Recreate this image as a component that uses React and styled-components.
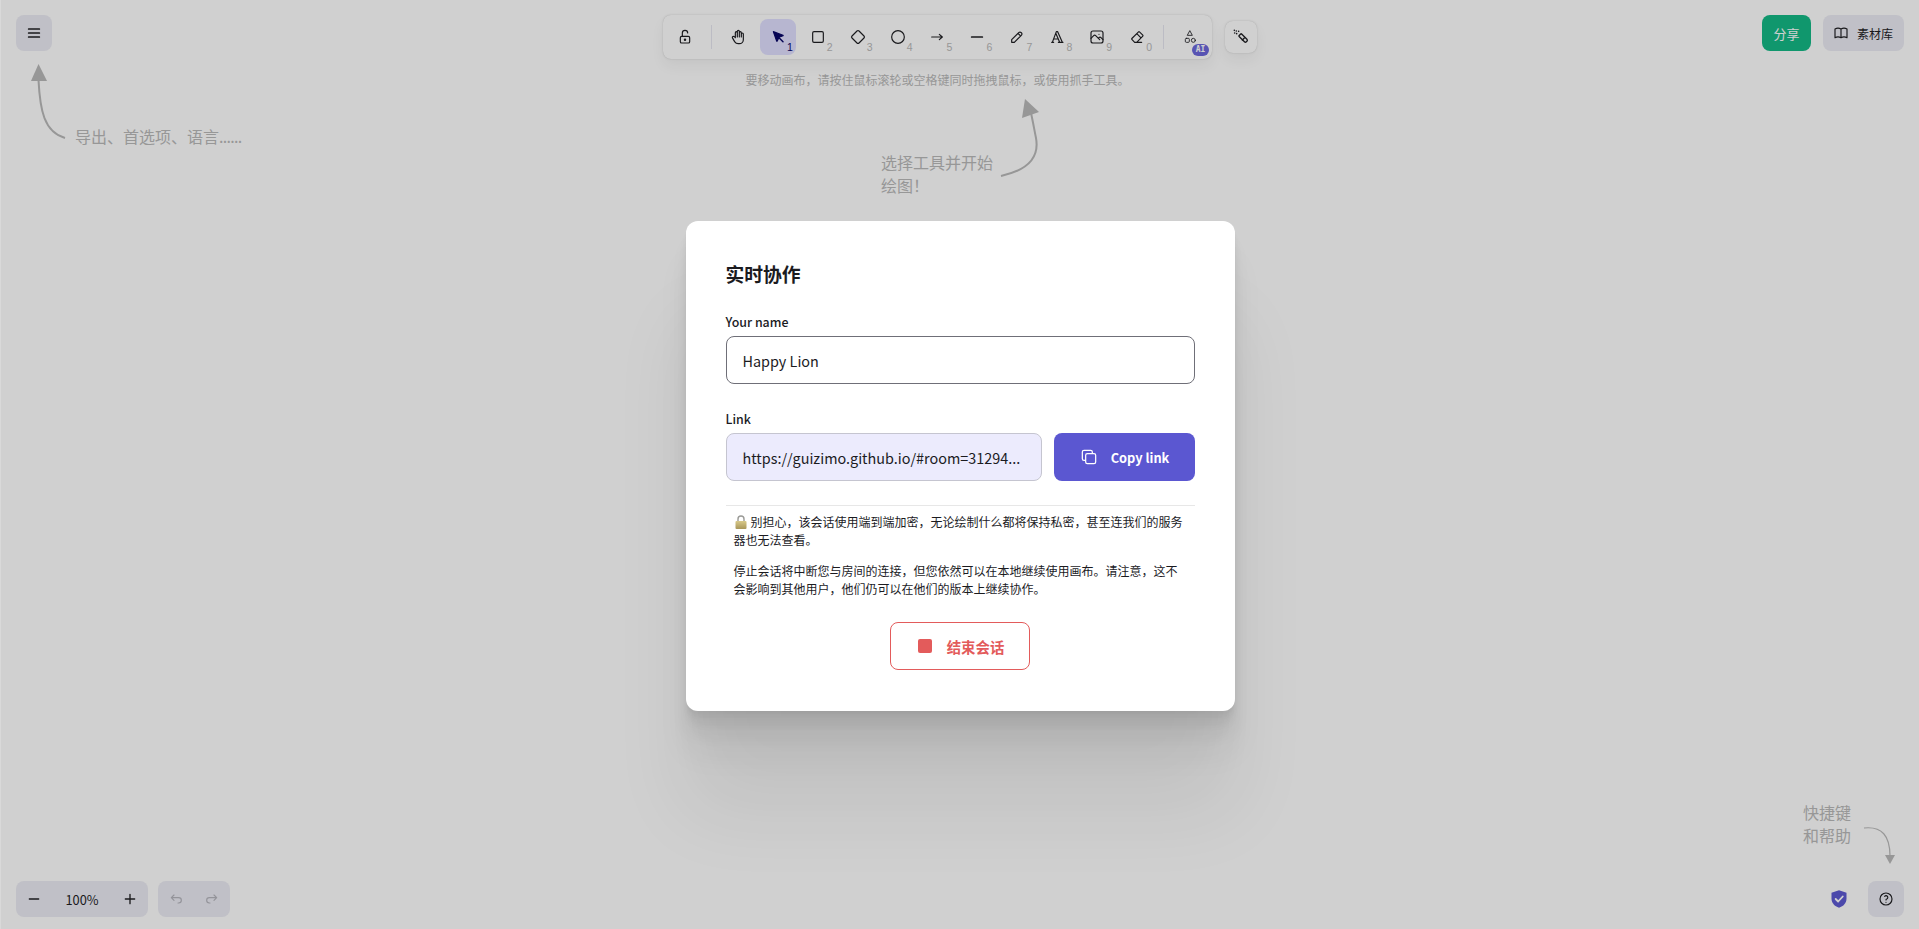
import React from "react";
import styled, { createGlobalStyle } from "styled-components";

const GlobalStyle = createGlobalStyle`
  html, body {
    margin: 0;
    padding: 0;
    height: 100%;
    background: #ffffff;
    overflow: hidden;
    font-family: "Noto Sans CJK SC", "Noto Sans", sans-serif;
  }
  * { box-sizing: border-box; }
`;

const Page = styled.div`
  position: relative;
  height: 100vh;
  display: flex;
  flex-direction: column;
  justify-content: space-between;
  padding: 15px 15px 12px 16px;
  color: #1b1b1f;
`;

const TopBar = styled.header`
  display: grid;
  grid-template-columns: 1fr auto 1fr;
  align-items: start;
`;

const BottomBar = styled.footer`
  display: flex;
  align-items: center;
  justify-content: space-between;
`;

const Row = styled.div`
  display: flex;
  align-items: ${(p) => p.$align || "center"};
  gap: ${(p) => p.$gap || 0}px;
  justify-content: ${(p) => p.$justify || "flex-start"};
`;

const SquareButton = styled.button`
  width: 36px;
  height: 36px;
  padding: 0;
  border: 0;
  border-radius: 8px;
  background: ${(p) => (p.$flat ? "transparent" : "#ececf4")};
  color: ${(p) => (p.$muted ? "#b4b4bc" : "#1b1b1f")};
  display: flex;
  align-items: center;
  justify-content: center;
`;

const ToolColumn = styled.div`
  display: flex;
  flex-direction: column;
  align-items: center;
  gap: 12px;
`;

const Toolbar = styled.div`
  display: flex;
  align-items: center;
  gap: 4px;
  padding: 4px;
  height: 44px;
  width: 549px;
  background: #ffffff;
  border-radius: 8px;
  box-shadow: 0 0 1px rgba(0, 0, 0, 0.17), 0 0 3px rgba(0, 0, 0, 0.08), 0 7px 14px rgba(0, 0, 0, 0.05);
`;

const ToolDivider = styled.span`
  width: 1px;
  height: 24px;
  margin: 0 4px;
  background: #e7e7f0;
`;

const ToolButton = styled.button`
  position: relative;
  width: 36px;
  height: 36px;
  padding: 0;
  border: 0;
  border-radius: 8px;
  background: ${(p) => (p.$active ? "#e0dfff" : "transparent")};
  color: ${(p) => (p.$active ? "#030064" : "#1b1b1f")};
  display: flex;
  align-items: center;
  justify-content: center;
`;

const ToolNumber = styled.span`
  position: absolute;
  right: 3px;
  bottom: 2px;
  font-size: 10.5px;
  line-height: 12px;
  color: ${(p) => (p.$active ? "#030064" : "#b8b8b8")};
`;

const AiBadge = styled.span`
  position: absolute;
  right: -1px;
  bottom: -1px;
  width: 17px;
  height: 12px;
  border-radius: 6px;
  background: #6965db;
  color: #ffffff;
  font-size: 8px;
  font-weight: 700;
  line-height: 12px;
  text-align: center;
  font-family: "DejaVu Sans Mono", monospace;
`;

const LaserButton = styled.button`
  width: 32px;
  height: 32px;
  margin: 6px 0 0 13px;
  padding: 0;
  border: 0;
  border-radius: 8px;
  background: #ffffff;
  color: #1b1b1f;
  box-shadow: 0 0 1px rgba(0, 0, 0, 0.17), 0 0 3px rgba(0, 0, 0, 0.08), 0 7px 14px rgba(0, 0, 0, 0.05);
  display: flex;
  align-items: center;
  justify-content: center;
`;

const CanvasHint = styled.div`
  font-size: 12px;
  line-height: 17px;
  color: #b8b8b8;
  white-space: nowrap;
`;

const ShareButton = styled.button`
  width: 49px;
  height: 36px;
  padding: 0;
  border: 0;
  border-radius: 8px;
  background: #0fb884;
  color: #ffffff;
  font: 400 13px "Noto Sans CJK SC", sans-serif;
`;

const LibraryButton = styled.button`
  width: 81px;
  height: 36px;
  padding: 0 0 0 10px;
  border: 0;
  border-radius: 8px;
  background: #ececf4;
  color: #1b1b1f;
  font: 400 12px "Noto Sans CJK SC", sans-serif;
  display: flex;
  align-items: center;
  gap: 8px;
`;

const ControlGroup = styled.div`
  display: flex;
  align-items: center;
  height: 36px;
  border-radius: 8px;
  background: #ececf4;
`;

const ZoomValue = styled.span`
  width: 60px;
  font-size: 12.8px;
  text-align: center;
`;

const Encrypted = styled.span`
  display: flex;
  margin-right: 19px;
  color: #5b57d1;
`;

const WelcomeText = styled.div`
  position: absolute;
  top: ${(p) => p.$top}px;
  left: ${(p) => p.$left}px;
  width: ${(p) => p.$width}px;
  font-size: 16px;
  line-height: 23px;
  color: #b8b8b8;
`;

const TightDots = styled.span`
  letter-spacing: -0.7px;
`;

const WelcomeArrow = styled.svg`
  position: absolute;
  top: ${(p) => p.$top}px;
  left: ${(p) => p.$left}px;
  fill: none;
  stroke: #b8b8b8;
  stroke-width: 2;
`;

const Overlay = styled.div`
  position: absolute;
  inset: 0;
  background: rgba(18, 18, 18, 0.2);
  box-shadow: inset 1px 0 0 rgba(255, 255, 255, 0.2);
  display: flex;
  align-items: center;
  justify-content: center;
`;

const Modal = styled.section`
  width: 549px;
  height: 490px;
  padding: 39.5px 40px;
  margin: 2px 0 0 1px;
  background: #ffffff;
  border-radius: 12px;
  box-shadow: 0 100px 80px rgba(0, 0, 0, 0.07), 0 41.78px 33.42px rgba(0, 0, 0, 0.05),
    0 22.34px 17.87px rgba(0, 0, 0, 0.042), 0 12.52px 10.02px rgba(0, 0, 0, 0.035),
    0 6.65px 5.32px rgba(0, 0, 0, 0.028), 0 2.77px 2.21px rgba(0, 0, 0, 0.02);
`;

const Title = styled.h2`
  margin: 0 0 24px;
  font-size: 18.8px;
  font-weight: 700;
  line-height: 28px;
  color: #1b1b1f;
`;

const Field = styled.label`
  display: flex;
  flex-direction: column;
  gap: 4px;
  flex: 1;
  min-width: 0;
  font-size: 12.4px;
  font-weight: 500;
  line-height: 20px;
  color: #1b1b1f;
`;

const TextInput = styled.input`
  width: 100%;
  height: 48px;
  padding: 0 16px;
  border: 1px solid ${(p) => (p.$readOnlyLook ? "#c5c5d0" : "#6f6f78")};
  border-radius: 8px;
  background: ${(p) => (p.$readOnlyLook ? "#ecebfd" : "#ffffff")};
  color: #1b1b1f;
  font: 400 14.4px "Noto Sans CJK SC", sans-serif;
  outline: none;
`;

const LinkRow = styled.div`
  display: flex;
  align-items: flex-end;
  gap: 12px;
  margin-top: 25px;
`;

const CopyButton = styled.button`
  flex: 0 0 141px;
  height: 48px;
  padding: 0;
  border: 0;
  border-radius: 8px;
  background: #5b57d1;
  color: #ffffff;
  font: 600 12.8px "Noto Sans CJK SC", sans-serif;
  display: flex;
  align-items: center;
  justify-content: center;
  gap: 12px;
`;

const Separator = styled.hr`
  height: 1px;
  margin: 24px 0 7px;
  border: 0;
  background: #e7e7e7;
`;

const Note = styled.p`
  margin: 0 0 12px;
  padding: 0 8px;
  font-size: 12px;
  line-height: 18.3px;
  color: #1b1b1f;
`;

const LockMark = styled.svg`
  display: inline-block;
  vertical-align: -2px;
  margin: 0 4px 0 1px;
`;

const EndRow = styled.div`
  display: flex;
  justify-content: center;
  margin-top: 24px;
`;

const EndButton = styled.button`
  width: 140px;
  height: 48px;
  padding: 0 0 0 2px;
  border: 1px solid #e35b5b;
  border-radius: 8px;
  background: #ffffff;
  color: #e35b5b;
  font: 600 14.4px "Noto Sans CJK SC", sans-serif;
  display: flex;
  align-items: center;
  justify-content: center;
  gap: 15px;
`;

const StopMark = styled.span`
  width: 14px;
  height: 14px;
  border-radius: 2px;
  background: #e35b5b;
`;

const Icon = ({ size = 16, width = 1.75, fill = "none", children }) => (
  <svg
    width={size}
    height={size}
    viewBox="0 0 24 24"
    fill={fill}
    stroke="currentColor"
    strokeWidth={width}
    strokeLinecap="round"
    strokeLinejoin="round"
  >
    {children}
  </svg>
);

const tools = [
  {
    key: "hand",
    icon: (
      <path d="M8 13v-7.5a1.5 1.5 0 0 1 3 0v6.5M11 5.5v-2a1.5 1.5 0 1 1 3 0v8.5M14 5.5a1.5 1.5 0 0 1 3 0v6.5M17 7.5a1.5 1.5 0 0 1 3 0v8.5a6 6 0 0 1 -6 6h-2h.208a6 6 0 0 1 -5.012 -2.7l-.196 -.3c-.312 -.479 -1.407 -2.388 -3.286 -5.728a1.5 1.5 0 0 1 .536 -2.022a1.867 1.867 0 0 1 2.28 .28l1.47 1.47" />
    ),
  },
  {
    key: "selection",
    n: 1,
    active: true,
    fill: "currentColor",
    icon: (
      <>
        <path d="M5 4l5 14.200a.4.4 0 0 0 .7 0l2.800-5.700 6-2.400a.4.4 0 0 0 0-.7z" />
        <path d="M13.500 13l6 6" strokeWidth="2.200" />
      </>
    ),
  },
  { key: "rectangle", n: 2, icon: <rect x="4" y="4" width="16" height="16" rx="2" /> },
  {
    key: "diamond",
    n: 3,
    icon: (
      <path d="M10.5 21l-7.500-7.500c-.8-.8-.8-2.200 0-3l7.500-7.500c.8-.8 2.200-.8 3 0l7.500 7.500c.8.8.8 2.200 0 3l-7.500 7.500c-.8.8-2.200.8-3 0z" />
    ),
  },
  { key: "ellipse", n: 4, icon: <circle cx="12" cy="12" r="9.500" /> },
  { key: "arrow", n: 5, icon: <path d="M4 12h16M15.500 8l4.500 4-4.500 4" /> },
  { key: "line", n: 6, width: 2.6, icon: <path d="M4 12h16" /> },
  {
    key: "draw",
    n: 7,
    icon: <path d="M4 20h4l10.5-10.5a2.83 2.83 0 0 0-4-4L4 16v4M13.5 6.5l4 4" />,
  },
  {
    key: "text",
    n: 8,
    icon: <path d="M4 20h3M14 20h7M6.9 15h6.9M10.2 6.3L16 20M5 20l6-16h2l7 16" />,
  },
  {
    key: "image",
    n: 9,
    icon: (
      <>
        <rect x="3" y="3" width="18" height="18" rx="3" />
        <path d="M3 14l4-4c1-1 2-1 3 0l6 6M14 14l1-1c1-1 2-1 3 0l3 3M15 8h.01" />
      </>
    ),
  },
  {
    key: "eraser",
    n: 0,
    icon: (
      <path d="M19 20h-10.500l-4.210-4.300a1 1 0 0 1 0-1.410l10-10a1 1 0 0 1 1.410 0l5 5a1 1 0 0 1 0 1.410l-9.200 9.300M18 13.300l-6.300-6.300" />
    ),
  },
];

const App = () => (
  <>
    <GlobalStyle />
    <Page>
      <TopBar>
        <div>
          <SquareButton>
            <Icon width={2.6}>
              <path d="M4 6h16M4 12h16M4 18h16" />
            </Icon>
          </SquareButton>
        </div>
        <Row $align="flex-start">
          <ToolColumn>
            <Toolbar>
              <ToolButton>
                <Icon>
                  <rect x="5" y="11" width="14" height="10" rx="2" />
                  <circle cx="12" cy="16" r="1" />
                  <path d="M8 11V6a4 4 0 0 1 8 0" />
                </Icon>
              </ToolButton>
              <ToolDivider />
              {tools.map((tool) => (
                <ToolButton key={tool.key} $active={tool.active}>
                  <Icon width={tool.width} fill={tool.fill}>
                    {tool.icon}
                  </Icon>
                  {tool.n !== undefined && <ToolNumber $active={tool.active}>{tool.n}</ToolNumber>}
                </ToolButton>
              ))}
              <ToolDivider />
              <ToolButton>
                <Icon width={1.3}>
                  <path d="M12 3l3.500 6.500h-7z" />
                  <rect x="5" y="14" width="6" height="6" rx="1.500" />
                  <circle cx="17" cy="17" r="3" />
                </Icon>
                <AiBadge>AI</AiBadge>
              </ToolButton>
            </Toolbar>
            <CanvasHint>{"要移动画布\uFF0C请按住鼠标滚轮或空格键同时拖拽鼠标\uFF0C或使用抓手工具。"}</CanvasHint>
          </ToolColumn>
          <LaserButton>
            <Icon width={2}>
              <path d="M9 10l2.500-2.500a1 1 0 0 1 1.400 0l8 8a2 2 0 0 1 0 2.800l-.9.900a2 2 0 0 1-2.800 0l-8-8a1 1 0 0 1 0-1.400z" />
              <path d="M14 16.500l3-3" />
              <path d="M5 3v.01M2.500 6v.01M8.500 3.500v.01M5.500 7v.01M2 2v.01" strokeWidth="2.400" />
            </Icon>
          </LaserButton>
        </Row>
        <Row $gap={12} $justify="flex-end">
          <ShareButton>分享</ShareButton>
          <LibraryButton>
            <Icon>
              <path d="M3 19a9 9 0 0 1 9 0a9 9 0 0 1 9 0M3 6a9 9 0 0 1 9 0a9 9 0 0 1 9 0M3 6v13M12 6v13M21 6v13" />
            </Icon>
            素材库
          </LibraryButton>
        </Row>
      </TopBar>

      <BottomBar>
        <Row $gap={10}>
          <ControlGroup>
            <SquareButton $flat>
              <Icon width={2}>
                <path d="M5 12h14" />
              </Icon>
            </SquareButton>
            <ZoomValue>100%</ZoomValue>
            <SquareButton $flat>
              <Icon width={2}>
                <path d="M12 5v14M5 12h14" />
              </Icon>
            </SquareButton>
          </ControlGroup>
          <ControlGroup>
            <SquareButton $flat $muted>
              <Icon>
                <path d="M9 14l-4-4 4-4M5 10h11a4 4 0 1 1 0 8h-1" />
              </Icon>
            </SquareButton>
            <SquareButton $flat $muted>
              <Icon>
                <path d="M15 14l4-4-4-4M19 10H8a4 4 0 1 0 0 8h1" />
              </Icon>
            </SquareButton>
          </ControlGroup>
        </Row>
        <Row>
          <Encrypted>
            <svg width="20" height="20" viewBox="0 0 24 24">
              <path fill="currentColor" d="M12 1.500l9 3v7c0 5.600-3.700 9.500-9 11-5.300-1.500-9-5.400-9-11v-7z" />
              <path fill="none" stroke="#fff" strokeWidth="2.200" strokeLinecap="round" strokeLinejoin="round" d="M8 12l3 3 5.500-6" />
            </svg>
          </Encrypted>
          <SquareButton>
            <Icon>
              <circle cx="12" cy="12" r="9" />
              <path d="M12 17v.01M12 13.500a1.500 1.500 0 0 1 1-1.500a2.600 2.600 0 1 0-3-4" />
            </Icon>
          </SquareButton>
        </Row>
      </BottomBar>

      <WelcomeText $top={125} $left={75} $width={200}>
        导出、首选项、语言<TightDots>......</TightDots>
      </WelcomeText>
      <WelcomeArrow $top={60} $left={28} width="42" height="84" viewBox="0 0 42 84">
        <path d="M10.500 20C12 50 16 72 37 78" />
        <path d="M10.500 4L3 21h16z" fill="#b8b8b8" stroke="none" />
      </WelcomeArrow>

      <WelcomeText $top={151} $left={881} $width={116}>{"选择工具并开始绘图\uFF01"}</WelcomeText>
      <WelcomeArrow $top={96} $left={998} width="44" height="84" viewBox="0 0 44 84">
        <path d="M3 80C26 75 42 64 38 42C36 32 35 26 33 17" />
        <path d="M27 3L24 22L41 16z" fill="#b8b8b8" stroke="none" />
      </WelcomeArrow>

      <WelcomeText $top={801} $left={1803} $width={50}>快捷键和帮助</WelcomeText>
      <WelcomeArrow $top={824} $left={1862} width="38" height="42" viewBox="0 0 38 42">
        <path d="M2 4C20 2 28 12 28 32" strokeWidth="1.200" />
        <path d="M28 40L23 31h10z" fill="#b8b8b8" stroke="none" />
      </WelcomeArrow>

      <Overlay>
        <Modal>
          <Title>实时协作</Title>
          <Field>
            Your name
            <TextInput defaultValue="Happy Lion" />
          </Field>
          <LinkRow>
            <Field>
              Link
              <TextInput $readOnlyLook readOnly value="https://guizimo.github.io/#room=31294..." />
            </Field>
            <CopyButton>
              <Icon size={20} width={1.5}>
                <path d="M8 10a2 2 0 0 1 2-2h8a2 2 0 0 1 2 2v8a2 2 0 0 1-2 2h-8a2 2 0 0 1-2-2zM16 8V6a2 2 0 0 0-2-2H6a2 2 0 0 0-2 2v8a2 2 0 0 0 2 2h2" />
              </Icon>
              Copy link
            </CopyButton>
          </LinkRow>
          <Separator />
          <Note>
            <LockMark width="12" height="14" viewBox="0 0 12 14">
              <defs>
                <linearGradient id="lockBody" x1="0" y1="0" x2="0" y2="1">
                  <stop offset="0" stopColor="#d8c98a" />
                  <stop offset="1" stopColor="#a8965a" />
                </linearGradient>
              </defs>
              <path d="M3 6.500V4a3 3 0 0 1 6 0v2.500" fill="none" stroke="#9a9a96" strokeWidth="1.400" />
              <rect x="0.500" y="6" width="11" height="8" rx="1" fill="url(#lockBody)" />
            </LockMark>
            {"别担心\uFF0C该会话使用端到端加密\uFF0C无论绘制什么都将保持私密\uFF0C甚至连我们的服务器也无法查看。"}
          </Note>
          <Note>{"停止会话将中断您与房间的连接\uFF0C但您依然可以在本地继续使用画布。请注意\uFF0C这不会影响到其他用户\uFF0C他们仍可以在他们的版本上继续协作。"}</Note>
          <EndRow>
            <EndButton>
              <StopMark />
              结束会话
            </EndButton>
          </EndRow>
        </Modal>
      </Overlay>
    </Page>
  </>
);

export default App;
